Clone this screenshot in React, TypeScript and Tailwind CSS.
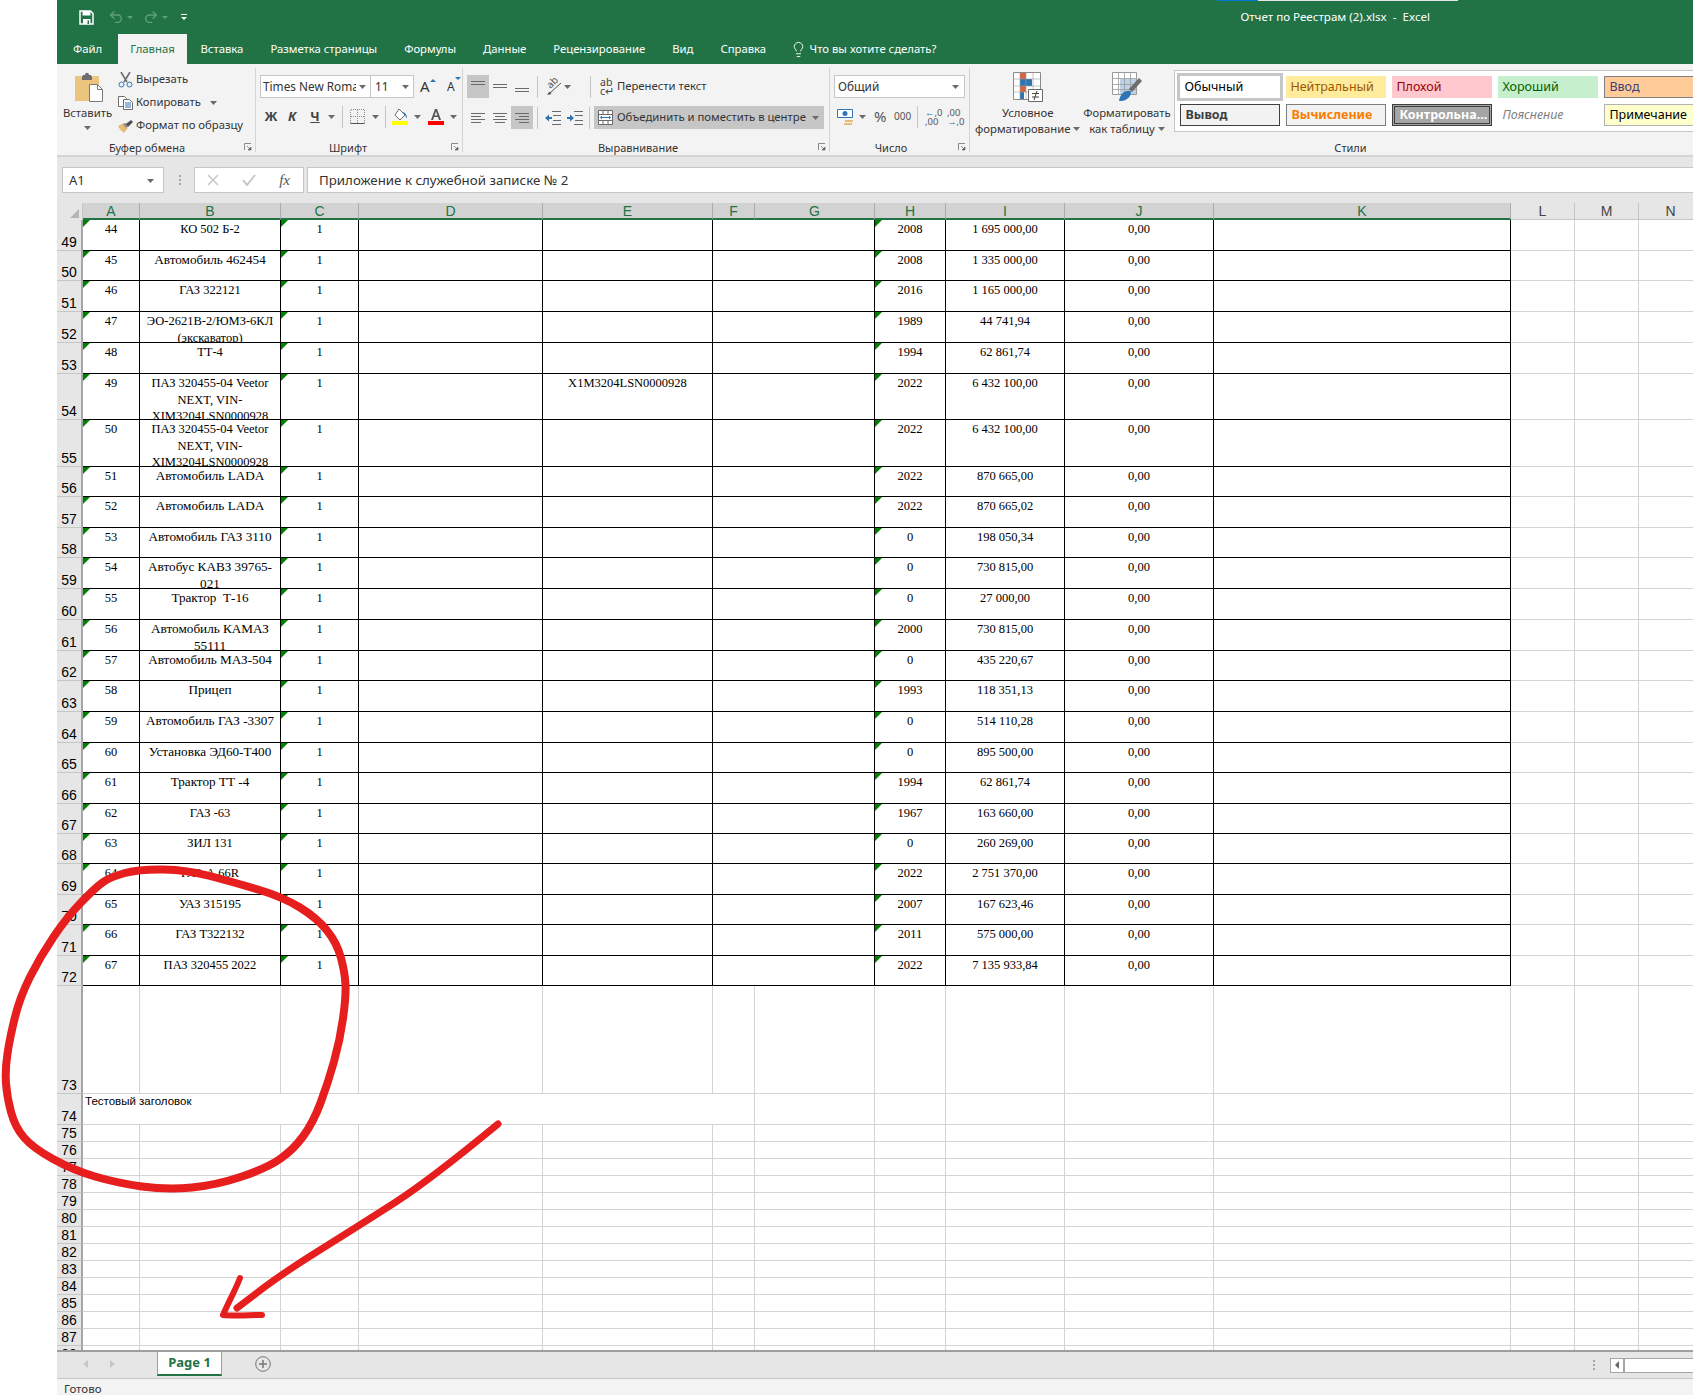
import type { ReactNode } from "react";
import { Lightbulb, Redo2, Undo2 } from "lucide-react";

type Row = { n: string; name: string; e?: string; year: string; price: string; h: string; head: string };

const rows: Row[] = [
  { head: "49", n: "44", name: "КО 502 Б-2", year: "2008", price: "1 695 000,00", h: "h-[31px]" },
  { head: "50", n: "45", name: "Автомобиль 462454", year: "2008", price: "1 335 000,00", h: "h-[30px]" },
  { head: "51", n: "46", name: "ГАЗ 322121", year: "2016", price: "1 165 000,00", h: "h-[31px]" },
  { head: "52", n: "47", name: "ЭО-2621В-2/ЮМЗ-6КЛ (экскаватор)", year: "1989", price: "44 741,94", h: "h-[31px]" },
  { head: "53", n: "48", name: "ТТ-4", year: "1994", price: "62 861,74", h: "h-[31px]" },
  { head: "54", n: "49", name: "ПАЗ 320455-04 Veetor NEXT, VIN-XIМ3204LSN0000928", e: "X1M3204LSN0000928", year: "2022", price: "6 432 100,00", h: "h-[46px]" },
  { head: "55", n: "50", name: "ПАЗ 320455-04 Veetor NEXT, VIN-XIМ3204LSN0000928", year: "2022", price: "6 432 100,00", h: "h-[47px]" },
  { head: "56", n: "51", name: "Автомобиль LADA", year: "2022", price: "870 665,00", h: "h-[30px]" },
  { head: "57", n: "52", name: "Автомобиль LADA", year: "2022", price: "870 665,02", h: "h-[31px]" },
  { head: "58", n: "53", name: "Автомобиль ГАЗ 3110", year: "0", price: "198 050,34", h: "h-[30px]" },
  { head: "59", n: "54", name: "Автобус КАВЗ 39765-021", year: "0", price: "730 815,00", h: "h-[31px]" },
  { head: "60", n: "55", name: "Трактор  Т-16", year: "0", price: "27 000,00", h: "h-[31px]" },
  { head: "61", n: "56", name: "Автомобиль КАМАЗ 55111", year: "2000", price: "730 815,00", h: "h-[31px]" },
  { head: "62", n: "57", name: "Автомобиль МАЗ-504", year: "0", price: "435 220,67", h: "h-[30px]" },
  { head: "63", n: "58", name: "Прицеп", year: "1993", price: "118 351,13", h: "h-[31px]" },
  { head: "64", n: "59", name: "Автомобиль ГАЗ -3307", year: "0", price: "514 110,28", h: "h-[31px]" },
  { head: "65", n: "60", name: "Установка ЭД60-Т400", year: "0", price: "895 500,00", h: "h-[30px]" },
  { head: "66", n: "61", name: "Трактор ТТ -4", year: "1994", price: "62 861,74", h: "h-[31px]" },
  { head: "67", n: "62", name: "ГАЗ -63", year: "1967", price: "163 660,00", h: "h-[30px]" },
  { head: "68", n: "63", name: "ЗИЛ 131", year: "0", price: "260 269,00", h: "h-[30px]" },
  { head: "69", n: "64", name: "ГАЗ-А 66R", year: "2022", price: "2 751 370,00", h: "h-[31px]" },
  { head: "70", n: "65", name: "УАЗ 315195", year: "2007", price: "167 623,46", h: "h-[30px]" },
  { head: "71", n: "66", name: "ГАЗ Т322132", year: "2011", price: "575 000,00", h: "h-[31px]" },
  { head: "72", n: "67", name: "ПАЗ 320455 2022", year: "2022", price: "7 135 933,84", h: "h-[30px]" },
];

const rowGrid = "grid grid-cols-[26px_57px_141px_78px_184px_170px_42px_120px_71px_119px_149px_297px_64px_64px_64px]";
const blackCell = "relative overflow-hidden border-r border-b border-black pt-[1px] text-center";
const lightCell = "border-r border-b border-[#d4d4d4]";

const columns = [
  { name: "A", on: true }, { name: "B", on: true }, { name: "C", on: true }, { name: "D", on: true },
  { name: "E", on: true }, { name: "F", on: true }, { name: "G", on: true }, { name: "H", on: true },
  { name: "I", on: true }, { name: "J", on: true }, { name: "K", on: true },
  { name: "L", on: false }, { name: "M", on: false }, { name: "N", on: false },
];

const tabs = ["Вставка", "Разметка страницы", "Формулы", "Данные", "Рецензирование", "Вид", "Справка"];

const styleCells = [
  { label: "Обычный", cls: "bg-white text-black ring-[3px] ring-[#c6c6c6]" },
  { label: "Нейтральный", cls: "bg-[#ffeb9c] text-[#9c5700]" },
  { label: "Плохой", cls: "bg-[#ffc7ce] text-[#9c0006]" },
  { label: "Хороший", cls: "bg-[#c6efce] text-[#006100]" },
  { label: "Ввод", cls: "border border-[#7f7f7f] bg-[#ffcc99] text-[#3f3f76]" },
  { label: "Вывод", cls: "border border-[#3f3f3f] bg-[#f2f2f2] font-bold text-[#3f3f3f]" },
  { label: "Вычисление", cls: "border border-[#7f7f7f] bg-[#f2f2f2] font-bold text-[#fa7d00]" },
  { label: "Контрольна...", cls: "border-[3px] border-double border-[#3f3f3f] bg-[#a5a5a5] font-bold text-white" },
  { label: "Пояснение", cls: "italic text-[#7f7f7f]" },
  { label: "Примечание", cls: "border border-[#b2b2b2] bg-[#ffffcc] text-black" },
];

// quadratic curve through the midpoints, good enough for a marker stroke
function smooth(pts: number[][], closed: boolean) {
  const mid = (a: number[], b: number[]) => `${(a[0] + b[0]) / 2} ${(a[1] + b[1]) / 2}`;
  let d = closed ? `M${mid(pts[pts.length - 1], pts[0])}` : `M${pts[0][0]} ${pts[0][1]}`;
  for (let i = closed ? 0 : 1; i < pts.length - 1; i++) {
    d += ` Q${pts[i][0]} ${pts[i][1]} ${mid(pts[i], pts[i + 1])}`;
  }
  const last = pts[pts.length - 1];
  d += closed ? ` Q${last[0]} ${last[1]} ${mid(last, pts[0])}` : ` L${last[0]} ${last[1]}`;
  return d;
}

const circlePts = [
  [95, 888], [110, 877], [140, 869], [187, 870], [233, 882], [283, 897], [317, 918], [337, 943], [345, 973], [346, 997],
  [340, 1040], [328, 1083], [313, 1123], [293, 1150], [267, 1168], [217, 1185], [167, 1190], [117, 1183], [73, 1170],
  [33, 1148], [15, 1127], [7, 1097], [5, 1070], [10, 1037], [20, 997], [40, 957], [67, 917],
];
const arrowPts = [[498, 1124], [430, 1180], [360, 1225], [283, 1273], [237, 1308]];

function Caret({ cls = "" }: { cls?: string }) {
  return (
    <svg viewBox="0 0 7 4" className={`h-[4px] w-[7px] shrink-0 ${cls}`}>
      <path d="M0 0h7L3.5 4z" fill="#6a6a6a" />
    </svg>
  );
}

function Sep({ cls = "" }: { cls?: string }) {
  return <div className={`h-[22px] w-px shrink-0 bg-[#c6c6c6] ${cls}`} />;
}

function Launcher() {
  return (
    <svg viewBox="0 0 8 8" className="absolute right-[3px] bottom-[1px] h-[8px] w-[8px]">
      <path d="M.5 7V.5H7" fill="none" stroke="#8a8a8a" />
      <path d="M3 3l3.5 3.5M7 4v3H4z" fill="#666" stroke="#666" strokeWidth=".7" />
    </svg>
  );
}

function Group({ cls, label, launcher, labelCls = "", children }: { cls: string; label: string; launcher?: boolean; labelCls?: string; children: ReactNode }) {
  return (
    <div className={`flex h-[84px] shrink-0 flex-col ${cls}`}>
      <div className="h-[72px]">{children}</div>
      <div className={`relative h-[12px] text-center text-[11px] leading-[16px] text-[#333] ${labelCls}`}>
        {label}
        {launcher && <Launcher />}
      </div>
    </div>
  );
}

function AlignIcon({ lines }: { lines: number[][] }) {
  return (
    <svg viewBox="0 0 16 16" className="h-4 w-4">
      {lines.map((l, i) => (
        <path key={i} d={`M${l[0]} ${l[2]}.5H${l[1]}`} stroke="#6a6a6a" fill="none" />
      ))}
    </svg>
  );
}

function AlignCell({ lines, on, cls = "" }: { lines: number[][]; on?: boolean; cls?: string }) {
  return (
    <div className={`flex h-[23px] w-[22px] items-center justify-center ${on ? "bg-[#c6c6c6]" : ""} ${cls}`}>
      <AlignIcon lines={lines} />
    </div>
  );
}

function IndentIcon({ flip }: { flip?: boolean }) {
  return (
    <svg viewBox="0 0 16 14" className="h-[14px] w-4 shrink-0">
      <path d="M7 .5h9M7 13.5h9M8 4.5h8M8 9.5h8" stroke="#6a6a6a" fill="none" />
      {flip ? (
        <path d="M0 6h3V3.5L7 7l-4 3.500V8H0z" fill="#2f75b5" />
      ) : (
        <path d="M7 6H4V3.500L0 7l4 3.500V8h3z" fill="#2f75b5" />
      )}
    </svg>
  );
}

function PasteIcon() {
  return (
    <svg viewBox="0 0 28 30" className="h-[30px] w-[28px]">
      <path d="M0 4h24v25H0z" fill="#ebc57e" />
      <path d="M8 3h2c0-3 4-3 4 0h2l1 2v3H7V5z" fill="#6d6d6d" />
      <path d="M14.500 12.500h8l5 5v12h-13z" fill="#fff" stroke="#7a7a7a" />
      <path d="M22.500 12.500v5h5" fill="none" stroke="#7a7a7a" />
    </svg>
  );
}

function ScissorsIcon() {
  return (
    <svg viewBox="0 0 15 16" className="h-4 w-[15px]">
      <path d="M3 0l6 10M12 0L6 10" stroke="#6d6d6d" strokeWidth="1.600" fill="none" />
      <circle cx="3.500" cy="12.500" r="2.500" fill="none" stroke="#2f75b5" />
      <circle cx="11.500" cy="12.500" r="2.500" fill="none" stroke="#2f75b5" />
    </svg>
  );
}

function CopyIcon() {
  return (
    <svg viewBox="0 0 15 14" className="h-[14px] w-[15px]">
      <path d="M.5.500h6l2 2v8h-8z" fill="#fff" stroke="#6d6d6d" />
      <path d="M5.500 3.500h6l3 3v7h-9z" fill="#fff" stroke="#6d6d6d" />
      <path d="M7 7h6M7 9h6M7 11h6" stroke="#2f75b5" />
    </svg>
  );
}

function BrushIcon() {
  return (
    <svg viewBox="0 0 16 14" className="h-[14px] w-4">
      <path d="M0 7l6-3 4 5-4 5C4 12 1 10 0 7z" fill="#e5bd78" />
      <path d="M5 5l3-1 2 3-2 2z" fill="#8a8a8a" />
      <path d="M8 5l5-4 2 2-5 5z" fill="#4f4f4f" />
    </svg>
  );
}

function BordersIcon() {
  return (
    <svg viewBox="0 0 15 15" className="h-[15px] w-[15px]">
      <path d="M.5 14.500h14" stroke="#555" fill="none" />
      <path d="M.5 14V.500h14V14M7.500 1v13M1 7.500h13" stroke="#8a8a8a" strokeDasharray="1 1" fill="none" />
    </svg>
  );
}

function FillIcon() {
  return (
    <svg viewBox="0 0 16 17" className="h-[17px] w-4">
      <path d="M7 1l6 6-5 5-5-5z" fill="#fff" stroke="#6d6d6d" />
      <path d="M10 4c3 0 5 3 5 6-1 0-1-1-2-3z" fill="#2f75b5" />
      <path d="M0 13h16v4H0z" fill="#ffff00" />
    </svg>
  );
}

function FontColorIcon() {
  return (
    <svg viewBox="0 0 16 17" className="h-[17px] w-4">
      <path d="M3 12L7 1h2l4 11h-2l-1-3H6l-1 3zM6.600 7.500h2.800L8 3.300z" fill="#555" />
      <path d="M0 13h16v4H0z" fill="#ff0000" />
    </svg>
  );
}

function OrientIcon() {
  return (
    <div className="relative h-[17px] w-[17px]">
      <span className="absolute top-[-2px] left-[1px] -rotate-45 text-[10px] leading-[12px] text-[#555]">ab</span>
      <svg viewBox="0 0 17 17" className="absolute inset-0 h-[17px] w-[17px]">
        <path d="M5 15L16 5" stroke="#555" fill="none" />
        <path d="M2 17l4.500-1-2-2.500z" fill="#555" />
      </svg>
    </div>
  );
}

function MergeIcon() {
  return (
    <svg viewBox="0 0 15 15" className="h-[15px] w-[15px] shrink-0">
      <path d="M.5.500h14v14H.5zM1 4.500h13M1 10.500h13M5 1v3M10 1v3M5 11v3M10 11v3" fill="#fff" stroke="#6a6a6a" />
      <path d="M3 7.500h9" stroke="#2f75b5" />
      <path d="M2 7.500l2-2v4zM13 7.500l-2-2v4z" fill="#2f75b5" />
    </svg>
  );
}

function CurrencyIcon() {
  return (
    <svg viewBox="0 0 17 16" className="h-4 w-[17px]">
      <path d="M.5.500h15v8H.5z" fill="#fff" stroke="#2f75b5" />
      <circle cx="8" cy="4.500" r="2.500" fill="#2f75b5" />
      <path d="M8 11h8v2H8zM7 14h8v2H7z" fill="#e5bd78" />
    </svg>
  );
}

function CondIcon() {
  return (
    <svg viewBox="0 0 30 30" className="h-[30px] w-[30px]">
      <path d="M.5.500h27v27H.5z" fill="#fff" stroke="#8a8a8a" />
      <path d="M7 1h6v6H7zM7 14h6v6H7z" fill="#d9633c" />
      <path d="M7 7h12v7H7z" fill="#2f75b5" />
      <path d="M7 20h4v7H7z" fill="#2f75b5" />
      <path d="M7 .500v27M13 .500v27M20 .500v20M.5 7h27M.5 14h27M.5 20h20" stroke="#9a9a9a" strokeWidth=".6" fill="none" />
      <path d="M15.500 17.500h14v12h-14z" fill="#fff" stroke="#6a6a6a" />
      <path d="M19 21.500h7M19 25h7M21 28l3-9" stroke="#444" fill="none" />
    </svg>
  );
}

function TableIcon() {
  return (
    <svg viewBox="0 0 30 30" className="h-[30px] w-[30px]">
      <path d="M.5.500h24v22H.5z" fill="#fff" stroke="#9a9a9a" />
      <path d="M8 7h16v15H8z" fill="#bcd0e6" />
      <path d="M.5 6.500h24M.5 12.500h24M.5 17.500h24M6.500 1v22M12.500 1v22M18.500 1v22" stroke="#9a9a9a" strokeWidth=".8" fill="none" />
      <path d="M17 17L27 6l3 3-10 11z" fill="#6d6d6d" />
      <path d="M7 29c1-7 6-11 11-10 2 2 0 6-3 8-3 2-5 2-8 2z" fill="#2f75b5" />
    </svg>
  );
}

function SaveIcon() {
  return (
    <svg viewBox="0 0 15 15" className="h-[15px] w-[15px] shrink-0">
      <path d="M1 1h10.500L14 3.500V14H1z" fill="none" stroke="#fff" strokeWidth="1.500" />
      <path d="M3.500 1h8v4.500h-8zM4 9h7.500v5H4z" fill="#fff" />
      <path d="M8.500 10.500h1.500V14H8.500z" fill="#217346" />
    </svg>
  );
}

function GreenMark() {
  return <span className="absolute top-0 left-0 h-0 w-0 border-t-[7px] border-r-[7px] border-t-[#008000] border-r-transparent" />;
}

function RowHead({ label, cls }: { label: string; cls: string }) {
  return (
    <div className={`flex items-end justify-center overflow-hidden border-r-2 border-b border-r-[#a6a6a6] border-b-[#c6c6c6] bg-[#e6e6e6] font-['Liberation_Sans',sans-serif] text-[14px] leading-[16px] text-black ${cls}`}>
      {label}
    </div>
  );
}

function EmptyRow({ label, h, merged }: { label: string; h: string; merged?: string }) {
  return (
    <div className={`${rowGrid} ${h}`}>
      <RowHead label={label} cls={h} />
      {merged ? (
        <div className={`col-span-6 overflow-hidden pl-[2px] font-['Liberation_Sans',sans-serif] text-[11.5px] leading-[15px] text-black ${lightCell}`}>{merged}</div>
      ) : (
        <>
          <div className={lightCell} />
          <div className={lightCell} />
          <div className={lightCell} />
          <div className={lightCell} />
          <div className={lightCell} />
          <div className={lightCell} />
        </>
      )}
      <div className={lightCell} />
      <div className={lightCell} />
      <div className={lightCell} />
      <div className={lightCell} />
      <div className={lightCell} />
      <div className={lightCell} />
      <div className={lightCell} />
      <div className={lightCell} />
    </div>
  );
}

function Ribbon() {
  return (
    <div className="flex h-[93px] shrink-0 border-b-2 border-[#d4d4d4] bg-[#f3f3f3] pt-[4px]">
      <Group cls="w-[199px] border-r border-[#d4d4d4]" label="Буфер обмена" labelCls="pr-[18px]" launcher>
        <div className="flex">
          <div className="flex w-[61px] flex-col items-center pt-[4px]">
            <div className="ml-[3px]"><PasteIcon /></div>
            <div className="mt-[3px] leading-[16px]">Вставить</div>
            <Caret cls="mt-[5px]" />
          </div>
          <div className="flex flex-col">
            <div className="flex h-[23px] items-center"><div className="w-[18px]"><ScissorsIcon /></div>Вырезать</div>
            <div className="flex h-[23px] items-center"><div className="w-[18px]"><CopyIcon /></div>Копировать<Caret cls="ml-[9px]" /></div>
            <div className="flex h-[23px] items-center"><div className="w-[18px]"><BrushIcon /></div>Формат по образцу</div>
          </div>
        </div>
      </Group>

      <Group cls="w-[207px] border-r border-[#d4d4d4]" label="Шрифт" labelCls="pr-[22px]" launcher>
        <div className="pl-[4px] pt-[7px]">
          <div className="flex h-[23px] items-center">
            <div className="flex h-[23px] w-[111px] items-center justify-between overflow-hidden border border-[#c6c6c6] bg-white pr-[4px] pl-[2px] text-[11.8px]">
              <span className="w-[93px] overflow-hidden whitespace-nowrap">Times New Roman</span>
              <Caret />
            </div>
            <div className="flex h-[23px] w-[43px] items-center justify-between border border-l-0 border-[#c6c6c6] bg-white px-[4px] text-[11.8px]">
              11<Caret />
            </div>
            <div className="relative ml-[6px] w-[27px] text-[15px] leading-none">A<span className="absolute top-0 left-[10px] h-0 w-0 border-x-[3px] border-b-[3px] border-x-transparent border-b-[#2f75b5]" /></div>
            <div className="relative w-[14px] text-[12px] leading-none">A<span className="absolute top-[-4px] left-[8px] h-0 w-0 border-x-[3px] border-t-[3px] border-x-transparent border-t-[#2f75b5]" /></div>
          </div>
          <div className="mt-[7px] flex h-[23px] items-center">
            <div className="w-[22px] text-center text-[13px] font-bold text-[#444]">Ж</div>
            <div className="w-[20px] text-center text-[13px] font-bold italic text-[#444]">К</div>
            <div className="w-[26px] text-center text-[13px] font-bold text-[#444] underline">Ч</div>
            <Caret />
            <Sep cls="ml-[7px]" />
            <div className="flex w-[28px] justify-center"><BordersIcon /></div>
            <Caret cls="ml-[1px]" />
            <Sep cls="ml-[6px]" />
            <div className="flex w-[28px] justify-center"><FillIcon /></div>
            <Caret />
            <div className="flex w-[29px] justify-center"><FontColorIcon /></div>
            <Caret />
          </div>
        </div>
      </Group>

      <Group cls="w-[367px] border-r border-[#d4d4d4]" label="Выравнивание" labelCls="pr-[16px]" launcher>
        <div className="pl-[4px] pt-[7px]">
          <div className="flex h-[23px] items-center">
            <AlignCell on lines={[[1, 15, 2], [1, 15, 5]]} />
            <AlignCell lines={[[1, 15, 5], [1, 15, 8]]} />
            <AlignCell lines={[[1, 15, 9], [1, 15, 12]]} />
            <Sep cls="ml-[4px]" />
            <div className="ml-[7px] flex w-[17px]"><OrientIcon /></div>
            <Caret cls="ml-[2px]" />
            <Sep cls="ml-[19px]" />
            <div className="ml-[9px] flex h-[23px] w-[17px] flex-col text-[10.5px] leading-[9px] text-[#444]"><span className="mt-[3px]">ab</span><span>c↵</span></div>
            <div className="whitespace-nowrap">Перенести текст</div>
          </div>
          <div className="mt-[8px] flex h-[23px] items-center">
            <AlignCell lines={[[1, 15, 3], [1, 11, 6], [1, 15, 9], [1, 11, 12]]} />
            <AlignCell lines={[[1, 15, 3], [3, 13, 6], [1, 15, 9], [3, 13, 12]]} />
            <AlignCell on lines={[[1, 15, 3], [5, 15, 6], [1, 15, 9], [5, 15, 12]]} />
            <Sep cls="ml-[4px]" />
            <div className="ml-[7px] w-[22px]"><IndentIcon /></div>
            <IndentIcon flip />
            <Sep cls="ml-[6px]" />
            <div className="ml-[4px] flex h-[23px] w-[230px] items-center bg-[#c6c6c6] pr-[5px] pl-[4px]">
              <MergeIcon />
              <span className="ml-[4px] flex-1 whitespace-nowrap">Объединить и поместить в центре</span>
              <Caret />
            </div>
          </div>
        </div>
      </Group>

      <Group cls="w-[140px] border-r border-[#d4d4d4]" label="Число" labelCls="pr-[17px]" launcher>
        <div className="pl-[4px] pt-[7px]">
          <div className="flex h-[23px] w-[131px] items-center justify-between border border-[#c6c6c6] bg-white pr-[5px] pl-[3px] text-[11.8px]">
            Общий<Caret />
          </div>
          <div className="mt-[7px] flex h-[23px] items-center">
            <div className="ml-[3px]"><CurrencyIcon /></div>
            <Caret cls="ml-[5px]" />
            <div className="ml-[8px] w-[19px] text-[15px] text-[#555]">%</div>
            <div className="ml-[1px] w-[21px] text-[10px] text-[#555]">000</div>
            <Sep cls="ml-[2px]" />
            <div className="ml-[7px] flex w-[22px] flex-col text-[9.5px] leading-[9px] text-[#555]"><span><span className="text-[#2f75b5]">←</span>,0</span><span>,00</span></div>
            <div className="flex w-[16px] flex-col text-[9.5px] leading-[9px] text-[#555]"><span>,00</span><span><span className="text-[#2f75b5]">→</span>,0</span></div>
          </div>
        </div>
      </Group>

      <Group cls="min-w-0 flex-1" label="Стили" labelCls="pl-[38px]">
        <div className="flex">
          <div className="ml-[5px] flex w-[107px] flex-col items-center pt-[4px] leading-[16px]">
            <CondIcon />
            <div className="mt-[3px]">Условное</div>
            <div className="flex items-center">форматирование<Caret cls="ml-[3px]" /></div>
          </div>
          <div className="ml-[3px] flex w-[87px] flex-col items-center pt-[4px] leading-[16px]">
            <TableIcon />
            <div className="mt-[3px]">Форматировать</div>
            <div className="flex items-center">как таблицу<Caret cls="ml-[3px]" /></div>
          </div>
          <div className="mt-[2px] ml-[4px] grid h-[62px] flex-1 auto-rows-[22px] grid-cols-[100px_100px_100px_100px_100px] gap-[6px] border border-[#c6c6c6] bg-white pt-[5px] pl-[5px] text-[12.5px]">
            {styleCells.map((s) => (
              <div key={s.label} className={`flex h-[22px] items-center overflow-hidden whitespace-nowrap px-[4px] ${s.cls}`}>{s.label}</div>
            ))}
          </div>
        </div>
      </Group>
    </div>
  );
}

function Sheet() {
  const lightRows = ["75", "76", "77", "78", "79", "80", "81", "82", "83", "84", "85", "86", "87", "88"];
  return (
    <div className="h-[1147px] shrink-0 overflow-hidden bg-white">
      <div className={`${rowGrid} h-[17px]`}>
        <div className="relative border-r border-[#c6c6c6] bg-[#e6e6e6]">
          <span className="absolute right-[3px] bottom-[2px] h-0 w-0 border-b-[9px] border-l-[9px] border-b-[#b5b5b5] border-l-transparent" />
        </div>
        {columns.map((c) => (
          <div
            key={c.name}
            className={`flex items-center justify-center border-r font-['Liberation_Sans',sans-serif] text-[14px] leading-none ${c.on ? "border-r-[#ababab] border-b-2 border-b-[#217346] bg-[#d2d2d2] text-[#217346]" : "border-r-[#c6c6c6] border-b border-b-[#c6c6c6] bg-[#e6e6e6] text-[#444]"}`}
          >
            {c.name}
          </div>
        ))}
      </div>

      {rows.map((r) => (
        <div key={r.head} className={`${rowGrid} ${r.h} font-['Liberation_Serif',serif] text-[12.5px] leading-[16.5px] text-black`}>
          <RowHead label={r.head} cls={r.h} />
          <div className={blackCell}><GreenMark />{r.n}</div>
          <div className={`${blackCell} whitespace-pre-wrap px-[3px] ${/^[А-Я][а-я]/.test(r.name) ? "text-[13.2px]" : ""}`}>{r.name}</div>
          <div className={blackCell}><GreenMark />1</div>
          <div className={blackCell} />
          <div className={blackCell}>{r.e}</div>
          <div className={`${blackCell} col-span-2`} />
          <div className={blackCell}><GreenMark />{r.year}</div>
          <div className={blackCell}>{r.price}</div>
          <div className={blackCell}>0,00</div>
          <div className={blackCell} />
          <div className={lightCell} />
          <div className={lightCell} />
          <div className={lightCell} />
        </div>
      ))}

      <EmptyRow label="73" h="h-[108px]" />
      <EmptyRow label="74" h="h-[31px]" merged="Тестовый заголовок" />
      {lightRows.map((l) => (
        <EmptyRow key={l} label={l} h="h-[17px]" />
      ))}
    </div>
  );
}

export default function App() {
  return (
    <div className="relative h-[1395px] w-full overflow-hidden bg-white pl-[57px] font-['Noto_Sans',sans-serif] text-[11.3px] text-[#333]">
      <div className="flex h-[1395px] flex-col">
        <div className="relative h-[64px] shrink-0 bg-[#217346] text-white">
          <div className="absolute top-0 left-[1160px] flex h-px w-[241px]">
            <div className="w-[41px] bg-[#0078d7]" />
            <div className="flex-1 bg-[#e6e6e6]" />
          </div>
          <div className="flex h-[34px] items-center justify-between pr-[263px] pl-[22px]">
            <div className="flex items-center">
              <SaveIcon />
              <Undo2 className="ml-[14px] h-4 w-4 text-[#5f9f7d]" strokeWidth={2} />
              <div className="ml-[3px] h-0 w-0 border-x-[3px] border-t-[3px] border-x-transparent border-t-[#5f9f7d]" />
              <Redo2 className="ml-[10px] h-4 w-4 text-[#5f9f7d]" strokeWidth={2} />
              <div className="ml-[3px] h-0 w-0 border-x-[3px] border-t-[3px] border-x-transparent border-t-[#5f9f7d]" />
              <div className="ml-[13px] flex flex-col items-center gap-[2px]">
                <div className="h-px w-[6px] bg-white" />
                <div className="h-0 w-0 border-x-[3px] border-t-[3px] border-x-transparent border-t-white" />
              </div>
            </div>
            <div className="text-[11.6px] whitespace-pre">Отчет по Реестрам (2).xlsx  -  Excel</div>
          </div>
          <div className="flex h-[30px] items-center">
            <div className="flex h-[30px] w-[61px] items-center justify-center">Файл</div>
            <div className="flex h-[30px] w-[69px] items-center justify-center bg-[#f3f3f3] text-[#217346]">Главная</div>
            {tabs.map((t) => (
              <div key={t} className="flex h-[30px] items-center px-[13.5px] whitespace-nowrap">{t}</div>
            ))}
            <Lightbulb className="ml-[10px] h-[17px] w-[17px]" strokeWidth={1.300} />
            <div className="ml-[3px] whitespace-nowrap">Что вы хотите сделать?</div>
          </div>
        </div>

        <Ribbon />

        <div className="flex h-[46px] shrink-0 bg-[#e6e6e6] pt-[10px] pl-[5px]">
          <div className="flex h-[26px] w-[102px] items-center justify-between border border-[#c6c6c6] bg-white pt-[2px] pr-[9px] pl-[6px] text-[13px]">
            A1
            <Caret />
          </div>
          <div className="ml-[14px] flex h-[26px] w-[3px] flex-col items-center justify-center gap-[2px]">
            <div className="h-[2px] w-[2px] bg-[#a6a6a6]" />
            <div className="h-[2px] w-[2px] bg-[#a6a6a6]" />
            <div className="h-[2px] w-[2px] bg-[#a6a6a6]" />
          </div>
          <div className="ml-[13px] flex h-[26px] w-[110px] items-center justify-between border border-[#c6c6c6] bg-white pr-[13px] pl-[12px]">
            <svg viewBox="0 0 12 12" className="h-3 w-3"><path d="M1 1l10 10M11 1L1 11" stroke="#c6c6c6" strokeWidth="1.500" /></svg>
            <svg viewBox="0 0 14 12" className="ml-[14px] h-3 w-[14px]"><path d="M1 6l4 5 8-10" stroke="#c6c6c6" strokeWidth="2" fill="none" /></svg>
            <span className="ml-[14px] font-['Liberation_Serif',serif] text-[15px] italic text-[#555]">fx</span>
          </div>
          <div className="ml-[3px] flex h-[26px] flex-1 items-center border border-r-0 border-[#c6c6c6] bg-white pt-[2px] pl-[11px] text-[13.3px]">
            Приложение к служебной записке № 2
          </div>
        </div>

        <Sheet />

        <div className="flex h-[29px] shrink-0 items-start border-t-2 border-b border-t-[#9e9e9e] border-b-[#c6c6c6] bg-[#e6e6e6]">
          <div className="flex h-[24px] w-[100px] items-center gap-[22px] pl-[26px]">
            <div className="h-0 w-0 border-y-[4px] border-r-[5px] border-y-transparent border-r-[#c6c6c6]" />
            <div className="h-0 w-0 border-y-[4px] border-l-[5px] border-y-transparent border-l-[#c6c6c6]" />
          </div>
          <div className="flex h-[24px] w-[65px] items-center justify-center border-x border-b-2 border-x-[#9e9e9e] border-b-[#217346] bg-white text-[13px] font-bold text-[#217346]">
            Page 1
          </div>
          <svg viewBox="0 0 16 16" className="mt-[4px] ml-[33px] h-4 w-4">
            <circle cx="8" cy="8" r="7.300" fill="none" stroke="#777" />
            <path d="M8 4v8M4 8h8" stroke="#777" strokeWidth="1.500" />
          </svg>
          <div className="ml-auto flex h-[26px] items-center">
            <div className="flex flex-col gap-[2px]">
              <div className="h-[2px] w-[2px] bg-[#a6a6a6]" />
              <div className="h-[2px] w-[2px] bg-[#a6a6a6]" />
              <div className="h-[2px] w-[2px] bg-[#a6a6a6]" />
            </div>
            <div className="ml-[15px] flex h-[15px] w-[83px] border border-r-0 border-[#a6a6a6] bg-white">
              <div className="flex w-[14px] items-center justify-center border-r-2 border-[#a6a6a6]">
                <div className="h-0 w-0 border-y-[4px] border-r-[4px] border-y-transparent border-r-[#666]" />
              </div>
            </div>
          </div>
        </div>

        <div className="flex-1 bg-[#f3f3f3] pt-[1px] pl-[7px] text-[11.5px] leading-[17px]">Готово</div>
      </div>

      <svg viewBox="0 0 1693 1395" className="pointer-events-none absolute inset-0 h-[1395px] w-[1693px]" fill="none" stroke="#e61e1e" strokeLinecap="round" strokeLinejoin="round">
        <path d={smooth(circlePts, true)} strokeWidth={8} />
        <path d={smooth(arrowPts, false)} strokeWidth={7} />
        <path d="M240 1278 C235 1291 228 1303 223 1315 C235 1316 250 1315 262 1315" strokeWidth={6} />
      </svg>
    </div>
  );
}
